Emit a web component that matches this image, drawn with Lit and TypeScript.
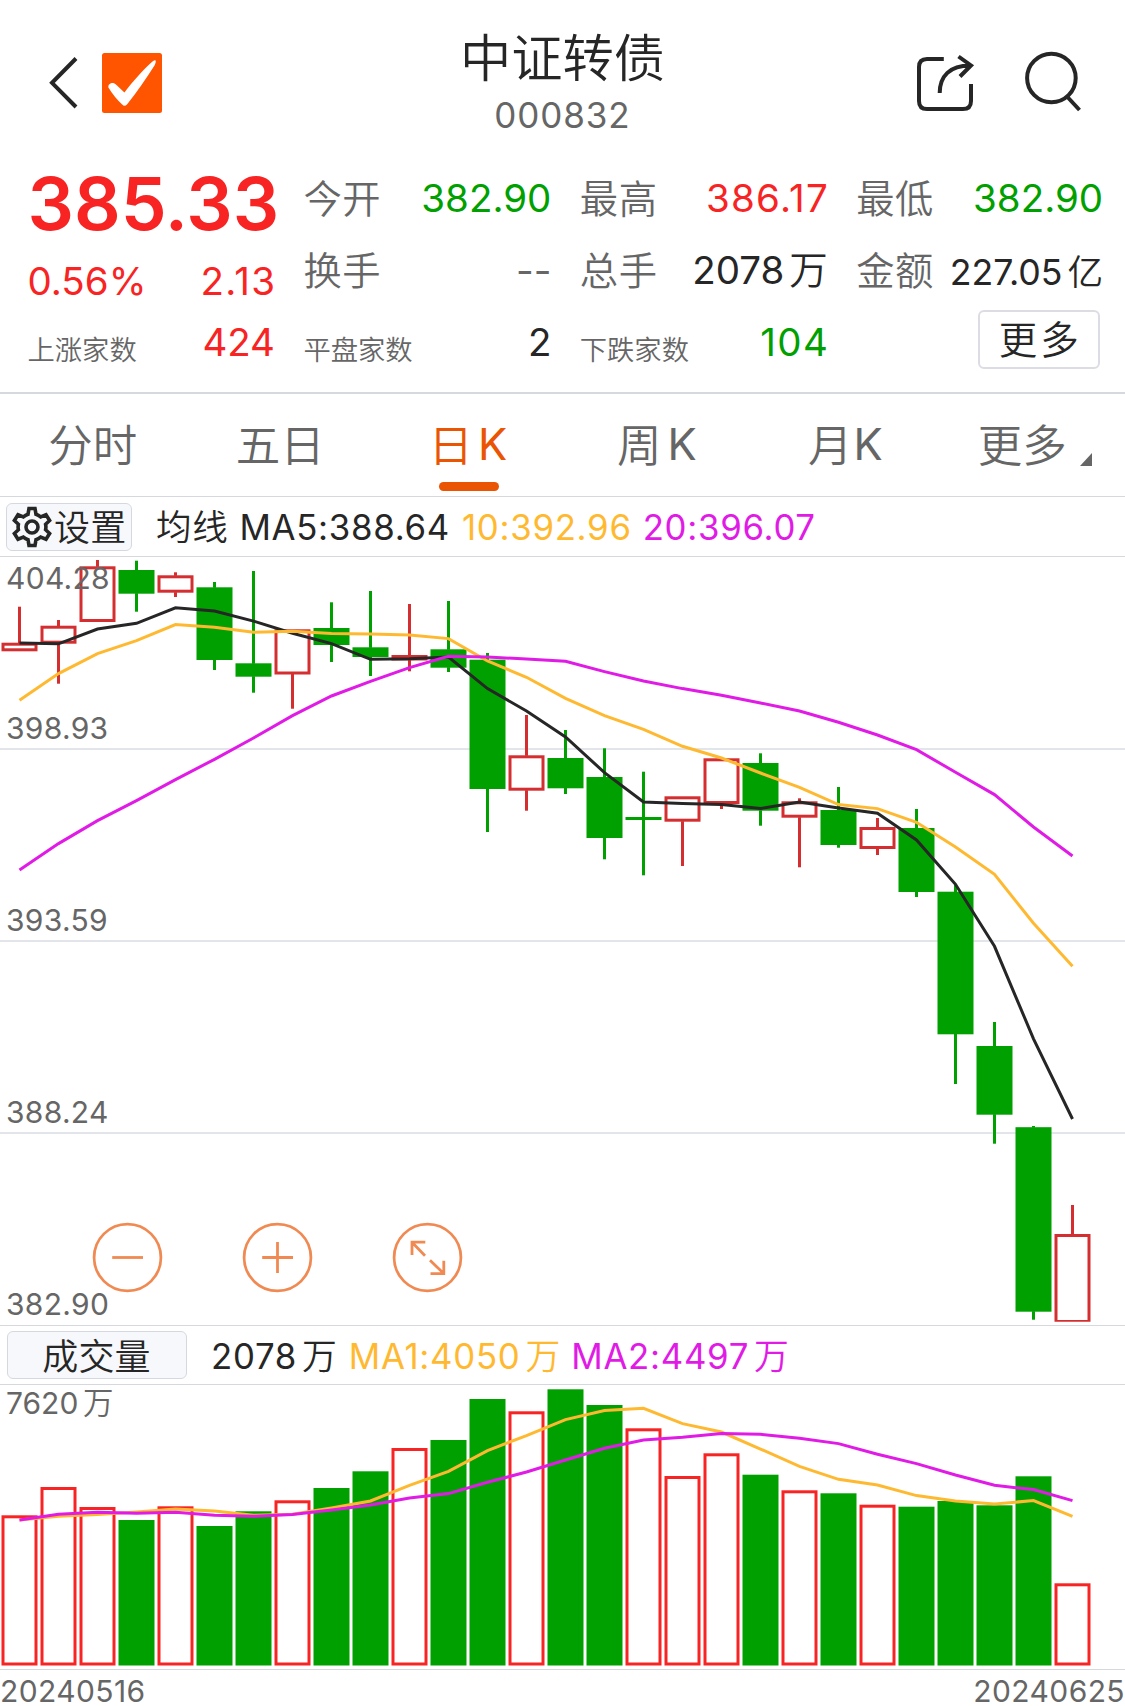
import { LitElement, html, svg, css } from "lit";
import { customElement } from "lit/decorators.js";

const STEP = 39;
const FIRST = 19.5;
const HALF = 18;
const xAt = (i: number) => FIRST + STEP * i;

type Candle = [up: 0 | 1, high: number, top: number, bottom: number, low: number];

/* Candles in chart coordinates: direction, high, body top, body bottom, low. */
const CANDLES: Candle[] = [
  [1, 606.7, 642.7, 651.3, 651.3],
  [1, 620, 625.7, 643.7, 683.7],
  [1, 560, 566.3, 622, 622],
  [0, 560.7, 570, 593.7, 611.7],
  [1, 572.3, 575.3, 592.7, 597],
  [0, 582, 587.3, 660, 670],
  [0, 571, 663.3, 676.7, 692.7],
  [1, 629.3, 629.3, 674.5, 708.7],
  [0, 602.3, 628, 645, 662],
  [0, 591, 647.3, 657, 676],
  [1, 604, 655, 660.5, 671.3],
  [0, 601, 649.3, 667.7, 672],
  [0, 653, 659.7, 789, 832],
  [1, 715, 755.3, 790.7, 810.7],
  [0, 730, 758, 788.3, 794],
  [0, 748.3, 777, 838, 859.3],
  [0, 771.7, 817, 820, 875.3],
  [1, 796.3, 796.3, 821.7, 866],
  [1, 758.3, 758.3, 804, 809],
  [0, 753.3, 763, 810.7, 825.7],
  [1, 798.3, 801.3, 817.7, 867.3],
  [0, 787, 810, 845, 847.7],
  [1, 818, 827, 849, 855],
  [0, 809, 828, 892, 897],
  [0, 884, 891.7, 1034.3, 1084],
  [0, 1022, 1046, 1114.7, 1143.7],
  [0, 1126, 1127.2, 1311.7, 1319.7],
  [1, 1205, 1234, 1323, 1323],
];

const MA5 = [642.8, 643.5, 628.7, 623, 607.5, 610.7, 620.8, 633, 643.3, 659, 658.5, 656.7, 688.3, 710.7, 736.7, 772.3, 801.7, 803.3, 804.3, 808.3, 801.7, 807.6, 813, 839.7, 884, 946, 1038.5, 1118.7];
const MA10 = [700, 673.3, 653.3, 640.3, 624.3, 627, 632, 631, 633.3, 633.6, 634.7, 638.3, 660.7, 677, 698, 715.3, 729, 746, 757.7, 772.7, 787, 804.3, 808.3, 822, 846.7, 874, 923, 966];
const MA20 = [869.7, 843.3, 820.3, 800.3, 779.3, 759, 737.7, 715.3, 695.7, 681, 667.3, 656, 656.7, 658.7, 661, 671.3, 680.7, 688.3, 695, 702.7, 710.7, 722, 734.7, 749.3, 772, 794.3, 826.7, 855.7];

/* Volume bars: direction and top edge. */
const VOLUMES: [0 | 1, number][] = [
  [1, 1515.3], [1, 1487], [1, 1507], [0, 1520], [1, 1506.3], [0, 1526], [0, 1511.3], [1, 1500.3],
  [0, 1488], [0, 1471.3], [1, 1448], [0, 1440], [0, 1399], [1, 1411.3], [0, 1389.3], [0, 1405],
  [1, 1428.3], [1, 1476], [1, 1453.3], [0, 1474.7], [1, 1490.3], [0, 1493.3], [1, 1504.7], [0, 1506.7],
  [0, 1501], [0, 1505.3], [0, 1476.3], [1, 1583.3],
];
const VOL_BASE = 1665.5;
const VMA1 = [1519.7, 1516, 1514.3, 1511.7, 1508.7, 1510.7, 1515, 1514, 1507.7, 1500.7, 1485, 1471, 1450.3, 1435.3, 1419.3, 1410.3, 1408, 1423.3, 1431.7, 1448.7, 1466, 1479, 1484.7, 1495.3, 1500.7, 1503.7, 1500.3, 1516];
const VMA2 = [1519.7, 1514, 1512, 1513, 1512, 1515, 1516, 1514.3, 1509.7, 1504.7, 1497.7, 1493.3, 1482, 1471.7, 1459.7, 1448, 1439.7, 1437, 1433.3, 1434, 1438, 1443.3, 1454, 1463.3, 1474.7, 1485, 1489.3, 1500.3];

const PRICE_LABELS: [string, number][] = [
  ["404.28", 589.4], ["398.93", 739.4], ["393.59", 931.2], ["388.24", 1123.3], ["382.90", 1315.1],
];

const line = (ys: number[], cls: string) =>
  svg`<polyline class="ma ${cls}" points=${ys.map((y, i) => `${xAt(i)},${y + 0.3}`).join(" ")} />`;

const bar = (i: number, top: number, bottom: number, up: number) => {
  const x = xAt(i);
  return up
    ? svg`<rect class="hollow" x=${x - HALF + 1.5} y=${top + 1.5} width=${2 * HALF - 3} height=${Math.max(bottom - top - 3, 1)} />`
    : svg`<rect class="solid" x=${x - HALF} y=${top} width=${2 * HALF} height=${bottom - top} />`;
};

@customElement("k-chart")
export class KChart extends LitElement {
  static styles = css`
    :host { display: block; height: 768px; position: relative; }
    .plot { display: block; width: 1125px; height: 768px; overflow: visible; }
    .grid { fill: #e2e6eb; }
    .hollow { fill: #fff; stroke: #d42e30; stroke-width: 3; }
    .solid { fill: #00a000; }
    .wick-up { fill: #d42e30; }
    .wick-down { fill: #00a000; }
    .ma { fill: none; stroke-width: 3; }
    .dark { stroke: #262626; }
    .amber { stroke: #ffb931; }
    .violet { stroke: #e11be6; }
    .axis { font: 370 30px Inter, sans-serif; letter-spacing: 0.3px; fill: #666; }
    .tools { position: absolute; left: 92px; top: 665px; display: flex; gap: 79px; }
    .tool { display: block; width: 71px; height: 71px; fill: none; stroke: #f08a52; stroke-width: 2.8; }
  `;
  render() {
    return html`
      <svg class="plot" viewBox="0 557 1125 768">
        ${[748, 940, 1132].map((y) => svg`<rect class="grid" x="0" y=${y} width="1125" height="2" />`)}
        <clipPath id="area"><rect x="0" y="557" width="1125" height="764.7" /></clipPath>
        <g clip-path="url(#area)">
          ${CANDLES.map(([up, hi, top, bottom, lo], i) => svg`
            ${hi < top ? svg`<rect class=${up ? "wick-up" : "wick-down"} x=${xAt(i) - 1.5} y=${hi} width="3" height=${top - hi + 0.5} />` : ""}
            ${lo > bottom ? svg`<rect class=${up ? "wick-up" : "wick-down"} x=${xAt(i) - 1.5} y=${bottom - 0.5} width="3" height=${lo - bottom + 0.5} />` : ""}
            ${bar(i, top, bottom, up)}`)}
        </g>
        ${line(MA5, "dark")}${line(MA10, "amber")}${line(MA20, "violet")}
        ${PRICE_LABELS.map(([t, y]) => svg`<text class="axis" x="6" y=${y}>${t}</text>`)}
      </svg>
      <div class="tools">
        <svg class="tool" viewBox="0 0 71 71"><circle cx="35.5" cy="35.5" r="33.4" /><path d="M20.2 35.5H51" /></svg>
        <svg class="tool" viewBox="0 0 71 71"><circle cx="35.5" cy="35.5" r="33.4" /><path d="M20.2 35.5H51M35.5 20V51" /></svg>
        <svg class="tool" viewBox="0 0 71 71"><circle cx="35.5" cy="35.5" r="33.4" /><path d="M33.3 20.2H20V33M20 20.2L33 33.8M38.5 51.6H51.8V38.8M51.8 51.6L38 38.2" /></svg>
      </div>`;
  }
}

@customElement("volume-chart")
export class VolumeChart extends LitElement {
  static styles = css`
    :host { display: block; height: 284px; }
    .plot { display: block; width: 1125px; height: 284px; overflow: visible; }
    .hollow { fill: #fff; stroke: #f82424; stroke-width: 3; }
    .solid { fill: #00a000; }
    .ma { fill: none; stroke-width: 3; }
    .amber { stroke: #ffb931; }
    .violet { stroke: #e11be6; }
    .axis { font: 370 30px Inter, sans-serif; fill: #666; }
    .cjk { font: 350 30.5px "Noto Sans CJK SC", sans-serif; fill: #666; }
  `;
  render() {
    return html`
      <svg class="plot" viewBox="0 1385 1125 284">
        ${VOLUMES.map(([up, top], i) => bar(i, top, VOL_BASE, up))}
        ${line(VMA1, "amber")}${line(VMA2, "violet")}
        <text class="axis" x="6" y="1414.3">7620</text><text class="cjk" x="83" y="1413.6">万</text>
      </svg>`;
  }
}

@customElement("app-root")
export class AppRoot extends LitElement {
  static styles = css`
    :host { display: block; width: 1125px; height: 1706px; overflow: hidden; background: #fff; color: #262626; font-family: Inter, "Noto Sans CJK SC", sans-serif; font-weight: 370; }
    * { box-sizing: border-box; }
    .cjk { font-family: "Noto Sans CJK SC", sans-serif; font-weight: 350; }
    .header { display: flex; height: 162px; align-items: flex-start; justify-content: space-between; }
    .side { display: block; width: 230px; height: 162px; }
    .heading { display: flex; flex-direction: column; align-items: center; }
    .title { font-size: 51.3px; line-height: 60px; margin-top: 25px; }
    .code { font-size: 35px; line-height: 40px; margin-top: 10px; letter-spacing: 0.9px; color: #666; }
    .ink { fill: none; stroke: #262626; stroke-width: 4; }
    .tick-box { fill: #ff5500; }
    .tick { fill: #fff; }

    .quote { display: grid; grid-template-columns: 247.5px 248px 248px 247px; column-gap: 28.4px; padding-left: 27.5px; height: 230px; }
    .col { display: flex; flex-direction: column; }
    .row { display: flex; justify-content: space-between; align-items: center; height: 72px; line-height: 50px; white-space: nowrap; }
    .price { height: 83px; }
    .left .row.count { height: 50px; }
    .big { font-size: 73px; font-weight: 590; letter-spacing: 0; }
    .num { font-size: 38.5px; }
    .wide { letter-spacing: 1.3px; margin-right: -1.3px; }
    .amount { font-size: 35.7px; margin-top: 4px; }
    .label { font-size: 38.3px; color: #666; margin-top: -3px; letter-spacing: 0.6px; }
    .label.small { font-size: 27.3px; margin-top: 11px; letter-spacing: 0; }
    .unit { font-family: "Noto Sans CJK SC", sans-serif; font-weight: 350; margin-left: 5px; line-height: 1; letter-spacing: 0; }
    .red { color: #f82424; }
    .green { color: #00a000; }
    .gray { color: #666; }
    .more { display: flex; align-items: center; justify-content: center; width: 122px; height: 59px; border: 2px solid #dcdde4; border-radius: 6px; margin: -6px 3.5px 0 auto; font-size: 38.5px; letter-spacing: 3px; padding: 0 0 4px 3px; }

    .tabs { display: grid; grid-template-columns: repeat(6, 1fr); height: 105px; border-top: 2px solid #d5d8dd; border-bottom: 1px solid #d5d8dd; color: #666; }
    .tab { display: flex; flex-direction: column; align-items: center; }
    .tab-text { display: flex; font-size: 44.5px; line-height: 60px; margin: 18.5px 2px 0 0; }
    .tab-text.week { margin: 18.5px 0 0 1px; }
    .tab-text.month { margin: 18.5px 0 0 3px; }
    .tab-text.nudge { margin: 18.5px 0 0 3px; }
    .latin { font-size: 43.5px; margin: 1px 0 0 5px; }
    .week .latin { margin-left: 6px; }
    .month .latin { margin-left: 1px; }
    .active { color: #ea5504; }
    .underline { width: 60px; height: 9px; border-radius: 4.5px; background: #ea5504; margin-top: 8.5px; }
    .corner { width: 12px; height: 13px; margin: 40.500px -4px 0 13px; fill: #666; }

    .legend { display: flex; align-items: center; height: 60px; border-bottom: 1px solid #d5d8dd; font-size: 34.8px; letter-spacing: 0.7px; white-space: nowrap; }
    .legend.volume { height: 60px; border-top: 1px solid #d5d8dd; }
    .button { display: flex; align-items: center; border: 1.5px solid #d5d9df; border-radius: 6px; background: #f6f8fb; height: 48px; font-size: 36px; letter-spacing: 0.2px; line-height: 44px; padding-bottom: 3px; }
    .settings { width: 126px; margin-left: 6px; padding-left: 4px; }
    .gear { width: 42px; height: 42px; margin: 3px 1px 0 0; flex: none; fill: none; stroke: #262626; stroke-width: 3.6; stroke-linejoin: miter; }
    .kind { width: 180px; margin-left: 7px; justify-content: center; padding-right: 1px; }
    .avg { font-size: 35.5px; margin: -3px 0 0 24px; line-height: 50px; }
    .ma5, .ma10, .ma20, .vol { margin-top: 1px; }
    .ma5 { margin-left: 11px; }
    .ma10 { margin-left: 12px; color: #ffb931; }
    .ma20 { margin-left: 11px; color: #e11be6; }
    .vol { margin-left: 24px; }
    .dates { display: flex; justify-content: space-between; border-top: 1px solid #d5d8dd; height: 37px; padding: 0; font-size: 30px; letter-spacing: 0.4px; line-height: 42px; color: #666; }
  `;

  render() {
    return html`
      <div class="header">
        <svg class="side" viewBox="0 0 230 162">
          <path class="ink" d="M76 58.5L52 82.8L76 107" />
          <rect class="tick-box" x="102" y="53" width="60" height="60" rx="2.5" />
          <path class="tick" d="M108.4 87.5C108 84.500 111 82.500 114 83.300Q115.800 84 117 85.600L124.400 92.500C133 81 143 70 152.500 61.500Q155.300 59.600 155.800 60.800Q156 62 154.800 65C146 79 137 92 127 104.500Q124.400 107 122.200 104.500Q114.500 97.500 108.400 87.500Z" />
        </svg>
        <div class="heading">
          <div class="title cjk">中证转债</div>
          <div class="code">000832</div>
        </div>
        <svg class="side" viewBox="895 0 230 162">
          <path class="ink" d="M943.800 59H927Q919 59 919 67V101Q919 109 927 109H963Q971 109 971 101V84" />
          <path class="ink" d="M939.700 93C939.700 76 950 65.500 970 65.500M958.500 56.500L971 65.500L960 76.500" />
          <circle class="ink" cx="1051.400" cy="78" r="24.300" />
          <path class="ink" d="M1067 96.500L1079.500 110" />
        </svg>
      </div>

      <div class="quote">
        <div class="col left">
          <div class="row price"><span class="big red">385.33</span></div>
          <div class="row"><span class="num red">0.56%</span><span class="num wide red">2.13</span></div>
          <div class="row count"><span class="label small cjk">上涨家数</span><span class="num red">424</span></div>
        </div>
        <div class="col">
          <div class="row"><span class="label cjk">今开</span><span class="num green">382.90</span></div>
          <div class="row"><span class="label cjk">换手</span><span class="num gray">--</span></div>
          <div class="row"><span class="label small cjk">平盘家数</span><span class="num">2</span></div>
        </div>
        <div class="col">
          <div class="row"><span class="label cjk">最高</span><span class="num wide red">386.17</span></div>
          <div class="row"><span class="label cjk">总手</span><span class="num">2078<span class="unit">万</span></span></div>
          <div class="row"><span class="label small cjk">下跌家数</span><span class="num wide green">104</span></div>
        </div>
        <div class="col">
          <div class="row"><span class="label cjk">最低</span><span class="num green">382.90</span></div>
          <div class="row"><span class="label cjk">金额</span><span class="amount">227.05<span class="unit">亿</span></span></div>
          <div class="row"><div class="more cjk">更多</div></div>
        </div>
      </div>

      <div class="tabs">
        <div class="tab"><div class="tab-text"><span class="cjk">分时</span></div></div>
        <div class="tab"><div class="tab-text"><span class="cjk">五日</span></div></div>
        <div class="tab active"><div class="tab-text"><span class="cjk">日</span><span class="latin">K</span></div><div class="underline"></div></div>
        <div class="tab"><div class="tab-text week"><span class="cjk">周</span><span class="latin">K</span></div></div>
        <div class="tab"><div class="tab-text month"><span class="cjk">月</span><span class="latin">K</span></div></div>
        <div class="tab"><div class="tab-text nudge"><span class="cjk">更多</span><svg class="corner" viewBox="0 0 12 13"><path d="M12 0V13H0Z" /></svg></div></div>
      </div>

      <div class="legend">
        <div class="button settings cjk">
          <svg class="gear" viewBox="0 0 42 42">
            <path d="M18 2.500H24L25 8.300Q27.500 9.200 29.600 10.900L35 8.800L38.600 14.500L34.600 18.300Q35.200 21 34.600 23.700L38.600 27.500L35 33.200L29.600 31.100Q27.500 32.800 25 33.700L24 39.500H18L17 33.700Q14.500 32.800 12.400 31.100L7 33.200L3.400 27.500L7.400 23.700Q6.800 21 7.400 18.300L3.400 14.500L7 8.800L12.400 10.900Q14.500 9.200 17 8.300Z" />
            <circle cx="21" cy="21" r="6" />
          </svg>
          <span>设置</span>
        </div>
        <span class="avg cjk">均线</span>
        <span class="ma5">MA5:388.64</span>
        <span class="ma10">10:392.96</span>
        <span class="ma20">20:396.07</span>
      </div>

      <k-chart></k-chart>

      <div class="legend volume">
        <div class="button kind cjk">成交量</div>
        <span class="vol">2078<span class="unit">万</span></span>
        <span class="ma10">MA1:4050<span class="unit">万</span></span>
        <span class="ma20">MA2:4497<span class="unit">万</span></span>
      </div>

      <volume-chart></volume-chart>

      <div class="dates"><span>20240516</span><span>20240625</span></div>
    `;
  }
}
